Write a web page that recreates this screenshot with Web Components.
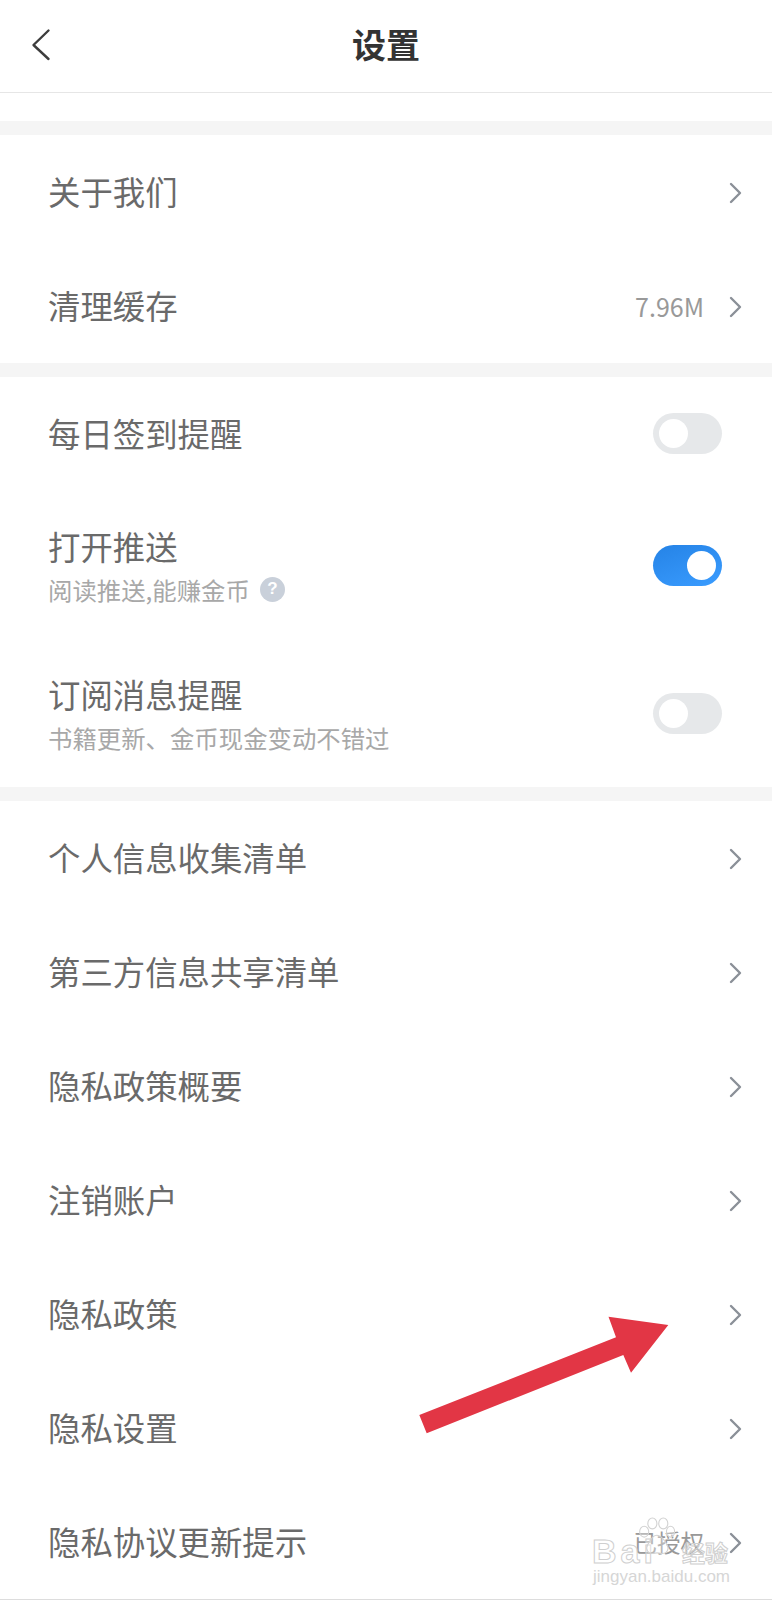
<!DOCTYPE html>
<html lang="zh">
<head>
<meta charset="utf-8">
<title>设置</title>
<style>
  html, body { margin: 0; background: #fff; }
  body { font-family: "Noto Sans CJK SC", "Liberation Sans", sans-serif; }
</style>
</head>
<body>
<settings-page>
  <app-header title="设置"></app-header>
  <settings-group first>
    <settings-row label="关于我们" chevron></settings-row>
    <settings-row label="清理缓存" value="7.96M" value-size="25" chevron></settings-row>
  </settings-group>
  <settings-group>
    <settings-row label="每日签到提醒"><toggle-switch></toggle-switch></settings-row>
    <settings-row label="打开推送" sub="阅读推送,能赚金币" help tall="150"><toggle-switch on></toggle-switch></settings-row>
    <settings-row label="订阅消息提醒" sub="书籍更新、金币现金变动不错过" tall="146"><toggle-switch></toggle-switch></settings-row>
  </settings-group>
  <settings-group>
    <settings-row label="个人信息收集清单" chevron></settings-row>
    <settings-row label="第三方信息共享清单" chevron></settings-row>
    <settings-row label="隐私政策概要" chevron></settings-row>
    <settings-row label="注销账户" chevron></settings-row>
    <settings-row label="隐私政策" chevron></settings-row>
    <settings-row label="隐私设置" chevron></settings-row>
    <settings-row label="隐私协议更新提示" value="已授权" value-size="23.5" chevron></settings-row>
  </settings-group>
  <red-arrow></red-arrow>
  <baidu-mark></baidu-mark>
</settings-page>

<script>
class SettingsPage extends HTMLElement {
  constructor() {
    super();
    this.attachShadow({ mode: "open" });
  }

  connectedCallback() {
    this.shadowRoot.innerHTML = /* html */`
    <style>
      :host {
        display: block;
        position: relative;
        width: 772px;
        height: 1600px;
        overflow: hidden;
        background: #fff;
        border-bottom: 1px solid #ddd;
        box-sizing: border-box;
      }
    </style>
    <slot></slot>`;
  }
}

class AppHeader extends HTMLElement {
  constructor() {
    super();
    this.attachShadow({ mode: "open" });
  }

  connectedCallback() {
    this.shadowRoot.innerHTML = /* html */`
    <style>
      :host {
        display: flex;
        align-items: center;
        justify-content: center;
        position: relative;
        height: 92px;
        border-bottom: 1px solid #e6e6e6;
      }
      h1 {
        margin: 0 0 6px;
        font-size: 34px;
        font-weight: 700;
        color: #333;
      }
      svg {
        position: absolute;
        left: 30px;
        top: 27px;
      }
    </style>
    <svg width="22" height="34" viewBox="0 0 22 34">
      <path d="M18.5 3.5 3.5 18l15 14" fill="none" stroke="#3d3d3d" stroke-width="2.4" stroke-linecap="round" stroke-linejoin="round"/>
    </svg>
    <h1>${this.getAttribute("title")}</h1>`;
  }
}

class SettingsGroup extends HTMLElement {
  constructor() {
    super();
    this.attachShadow({ mode: "open" });
  }

  connectedCallback() {
    const top = this.hasAttribute("first") ? 28 : 0;
    this.shadowRoot.innerHTML = /* html */`
    <style>
      :host {
        display: block;
        padding-top: ${top}px;
      }
      .band {
        height: 14px;
        background: #f5f5f5;
      }
    </style>
    <div class="band"></div>
    <slot></slot>`;
  }
}

class SettingsRow extends HTMLElement {
  constructor() {
    super();
    this.attachShadow({ mode: "open" });
  }

  connectedCallback() {
    const sub = this.getAttribute("sub");
    const value = this.getAttribute("value");
    const help = this.hasAttribute("help")
      ? `<span class="help">?</span>`
      : "";
    const chevron = this.hasAttribute("chevron") ? /* html */`
      <svg class="chevron" width="13" height="22" viewBox="0 0 13 22">
        <path d="M2 2l9 9-9 9" fill="none" stroke="#8b9098" stroke-width="2.4" stroke-linecap="round" stroke-linejoin="round"/>
      </svg>` : "";

    this.shadowRoot.innerHTML = /* html */`
    <style>
      :host {
        display: flex;
        align-items: center;
        height: ${this.getAttribute("tall") || 114}px;
        padding: 0 31px 0 48px;
      }
      .text {
        flex: 1;
        ${sub ? "margin-top: 4px;" : "margin-bottom: 2px;"}
      }
      .label {
        font-size: 32.4px;
        line-height: 42px;
        color: #6a6a6a;
      }
      .sub {
        display: flex;
        align-items: center;
        gap: 10px;
        font-size: 24.4px;
        line-height: 45px;
        color: #a8a8a8;
      }
      .help {
        display: grid;
        place-items: center;
        width: 25px;
        height: 25px;
        border-radius: 50%;
        background: #c9d0da;
        color: #fff;
        font: 700 17px "Liberation Sans", sans-serif;
      }
      .value {
        font-size: ${this.getAttribute("value-size") || 24}px;
        color: #999;
        margin-right: 25px;
      }
      .chevron {
        margin: 1px -1px 0 0;
      }
      ::slotted(toggle-switch) {
        margin: -1px 19px 0 0;
      }
    </style>
    <div class="text">
      <div class="label">${this.getAttribute("label")}</div>
      ${sub ? `<div class="sub"><span>${sub}</span>${help}</div>` : ""}
    </div>
    ${value ? `<span class="value">${value}</span>` : ""}
    ${chevron}
    <slot></slot>`;
  }
}

class ToggleSwitch extends HTMLElement {
  constructor() {
    super();
    this.attachShadow({ mode: "open" });
  }

  connectedCallback() {
    this.shadowRoot.innerHTML = /* html */`
    <style>
      :host {
        display: flex;
        align-items: center;
        justify-content: flex-start;
        box-sizing: border-box;
        width: 69px;
        height: 41px;
        padding: 0 6px;
        border-radius: 21px;
        background: #e6e8ea;
      }
      :host([on]) {
        justify-content: flex-end;
        background: linear-gradient(160deg, #2583e6, #3a9cff);
      }
      i {
        width: 29px;
        height: 29px;
        border-radius: 50%;
        background: #fff;
      }
    </style>
    <i></i>`;
  }
}

class RedArrow extends HTMLElement {
  constructor() {
    super();
    this.attachShadow({ mode: "open" });
  }

  connectedCallback() {
    this.shadowRoot.innerHTML = /* html */`
    <style>
      :host {
        position: absolute;
        left: 410px;
        top: 1310px;
      }
      svg { display: block; }
    </style>
    <svg width="270" height="130" viewBox="410 1310 270 130">
      <polygon fill="#e23645" points="419.3,1415 616,1337.3 608.5,1316.7 668.3,1325 631,1372.7 623.3,1355 426.7,1433.3"/>
    </svg>`;
  }
}

class BaiduMark extends HTMLElement {
  constructor() {
    super();
    this.attachShadow({ mode: "open" });
  }

  connectedCallback() {
    this.shadowRoot.innerHTML = /* html */`
    <style>
      :host {
        position: absolute;
        left: 592px;
        top: 1515px;
        width: 140px;
        height: 72px;
        color: #d6d6d6;
        font-family: "Liberation Sans", sans-serif;
      }
      svg {
        position: absolute;
        left: 44px;
        top: 2px;
      }
      .brand {
        position: absolute;
        left: 0;
        top: 17px;
        font-size: 34px;
        line-height: 38px;
        font-weight: 700;
        color: rgba(255, 255, 255, .35);
        -webkit-text-stroke: 1px #cfcfcf;
        letter-spacing: 4px;
        white-space: nowrap;
      }
      .cn {
        position: absolute;
        left: 90px;
        top: 22px;
        font: 700 23px/30px "Noto Sans CJK SC", sans-serif;
        color: rgba(255, 255, 255, .35);
        -webkit-text-stroke: 1px #cfcfcf;
        white-space: nowrap;
      }
      .site {
        position: absolute;
        left: 1px;
        top: 52px;
        font-size: 17px;
        line-height: 20px;
        white-space: nowrap;
      }
    </style>
    <div class="brand">Bai</div>
    <div class="cn">经验</div>
    <svg width="40" height="42" viewBox="0 0 44 46" fill="rgba(255,255,255,.3)" stroke="#d2d2d2" stroke-width="1.2">
      <ellipse cx="9" cy="16" rx="5" ry="6"/>
      <ellipse cx="18" cy="7" rx="5" ry="6"/>
      <ellipse cx="30" cy="7" rx="5" ry="6"/>
      <ellipse cx="38" cy="16" rx="4.5" ry="6"/>
      <path d="M23 20c6 0 8 6 11 10 3 5 0 11-6 10-4-1-6-1-9 0-6 1-9-5-6-10 3-4 4-10 10-10z"/>
    </svg>
    <div class="site">jingyan.baidu.com</div>`;
  }
}

customElements.define("settings-page", SettingsPage);
customElements.define("app-header", AppHeader);
customElements.define("settings-group", SettingsGroup);
customElements.define("settings-row", SettingsRow);
customElements.define("toggle-switch", ToggleSwitch);
customElements.define("red-arrow", RedArrow);
customElements.define("baidu-mark", BaiduMark);
</script>
</body>
</html>
